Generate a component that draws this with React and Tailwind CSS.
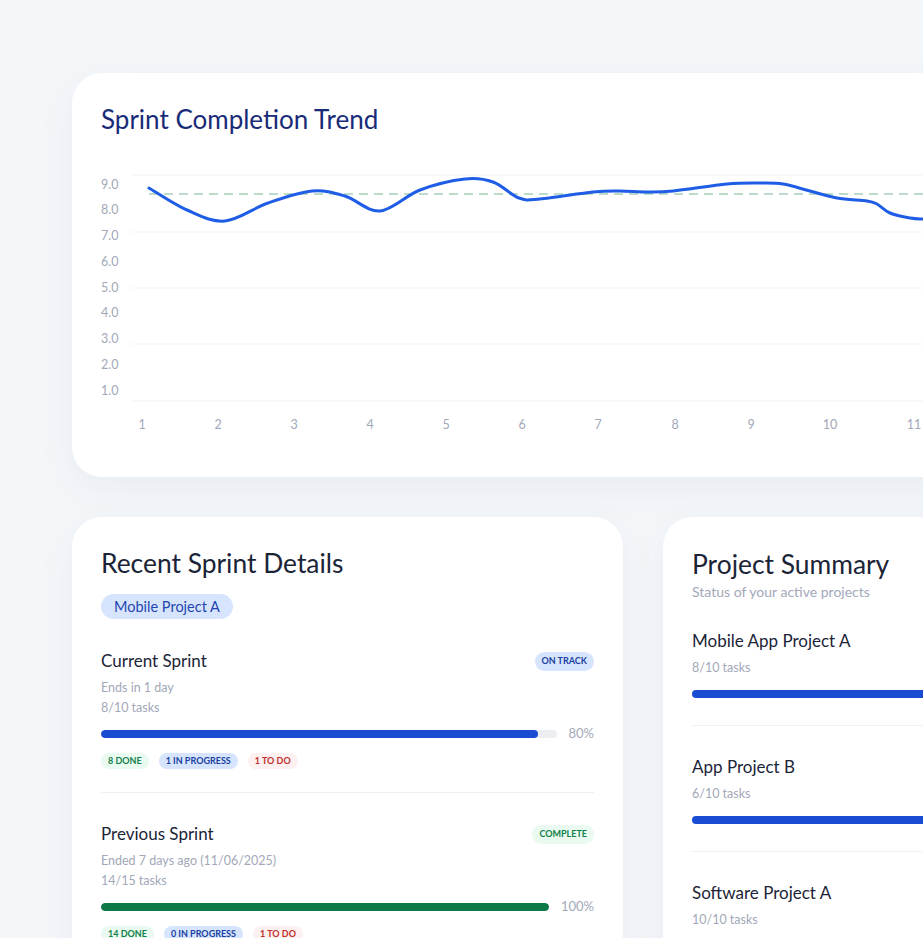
import React from 'react';

// sprint scores plotted as pixel points along the trend chart
const trend = [
  [48, 28], [86, 50], [124, 61], [167, 43], [211, 31], [244, 36], [279, 51],
  [319, 30], [364, 19], [392, 22], [418, 38], [439, 39], [492, 32], [519, 31],
  [546, 32], [572, 31], [626, 24], [659, 23], [682, 24], [709, 31], [736, 38],
  [766, 41], [776, 44], [789, 53], [809, 58], [822, 59], [860, 59]
];

const yLabels = ['9.0', '8.0', '7.0', '6.0', '5.0', '4.0', '3.0', '2.0', '1.0'];
const xLabels = [41, 117, 193, 269, 345, 421, 497, 574, 650, 729, 813];
const gridLines = [15, 72, 128, 184, 241];

function smoothPath(pts) {
  let d = `M${pts[0][0]},${pts[0][1]}`;
  for (let i = 0; i < pts.length - 1; i++) {
    const p0 = pts[i - 1] || pts[i];
    const p1 = pts[i];
    const p2 = pts[i + 1];
    const p3 = pts[i + 2] || p2;
    const c1x = p1[0] + (p2[0] - p0[0]) / 6;
    const c1y = p1[1] + (p2[1] - p0[1]) / 6;
    const c2x = p2[0] - (p3[0] - p1[0]) / 6;
    const c2y = p2[1] - (p3[1] - p1[1]) / 6;
    d += ` C${c1x},${c1y} ${c2x},${c2y} ${p2[0]},${p2[1]}`;
  }
  return d;
}

function TrendChart() {
  return (
    <svg width="850" height="280" className="block mt-[25px] overflow-visible">
      {gridLines.map(y => (
        <line key={y} x1="31" x2="850" y1={y} y2={y} stroke="#f1f3f7" strokeWidth="1" />
      ))}
      {yLabels.map((label, i) => (
        <text
          key={label}
          x="0"
          y={25.5 + i * 25.75}
          dominantBaseline="middle"
          fill="#a2a8b8"
          fontSize="12.5"
          fontFamily="Lato, sans-serif"
        >
          {label}
        </text>
      ))}
      {xLabels.map((x, i) => (
        <text
          key={x}
          x={x}
          y="265.5"
          textAnchor="middle"
          dominantBaseline="middle"
          fill="#a2a8b8"
          fontSize="12.5"
          fontFamily="Lato, sans-serif"
        >
          {i + 1}
        </text>
      ))}
      <line x1="48" x2="850" y1="34" y2="34" stroke="#bcdcc9" strokeWidth="2" strokeDasharray="9 6" />
      <path d={smoothPath(trend)} fill="none" stroke="#1f5de6" strokeWidth="3" strokeLinecap="round" />
    </svg>
  );
}

const badgeTones = {
  green: 'bg-[#eafaf1] text-[#11804a]',
  blue: 'bg-[#d6e5fd] text-[#1b3fa0]',
  red: 'bg-[#fdf0f0] text-[#c0312b]'
};

function Badge({ tone, children, className = '' }) {
  return (
    <span
      className={`inline-flex items-center h-4 px-[7px] rounded-full text-[9px] font-bold uppercase ${badgeTones[tone]} ${className}`}
    >
      {children}
    </span>
  );
}

function Progress({ fill, color, label }) {
  return (
    <div className="flex items-center gap-3 h-5">
      <div className="flex-1 h-2 rounded-full bg-[#eceef2] overflow-hidden">
        <div className={`h-full rounded-full ${color}`} style={{ width: fill }} />
      </div>
      <span className="text-[13px] text-[#a2a8b8]">{label}</span>
    </div>
  );
}

function SprintBlock({ title, status, statusTone, when, tasks, fill, color, pct, counts }) {
  return (
    <div>
      <div className="flex items-center justify-between h-6">
        <span className="text-[17px] text-[#1b2437]">{title}</span>
        <Badge tone={statusTone} className="h-[19px]">{status}</Badge>
      </div>
      <div className="mt-[5px] text-[12.5px] leading-5 text-[#a2a8b8]">{when}</div>
      <div className="text-[12.5px] leading-5 text-[#a2a8b8]">{tasks}</div>
      <div className="mt-[6px]">
        <Progress fill={fill} color={color} label={pct} />
      </div>
      <div className="mt-[9px] flex gap-[10px]">
        <Badge tone="green">{counts[0]} done</Badge>
        <Badge tone="blue">{counts[1]} in progress</Badge>
        <Badge tone="red">{counts[2]} to do</Badge>
      </div>
    </div>
  );
}

const projects = [
  { name: 'Mobile App Project A', tasks: '8/10 tasks' },
  { name: 'App Project B', tasks: '6/10 tasks' },
  { name: 'Software Project A', tasks: '10/10 tasks' }
];

export default function App() {
  return (
    <div className="relative w-[923px] h-[938px] overflow-hidden bg-[#f4f7fa] font-['Lato',sans-serif] pl-[72px] pt-[73px]">
      {/* Trend chart card */}
      <section className="w-[900px] h-[404px] rounded-[30px] bg-white shadow-[0_12px_40px_rgba(30,50,90,0.06)] pt-[30px] pl-[29px] overflow-hidden">
        <h2 className="text-[26px] leading-8 text-[#182b78]">Sprint Completion Trend</h2>
        <TrendChart />
      </section>

      <div className="mt-10 flex gap-10">
        {/* Recent sprints */}
        <section className="w-[551px] h-[460px] shrink-0 rounded-[30px] bg-white shadow-[0_12px_40px_rgba(30,50,90,0.06)] pt-[30px] px-[29px]">
          <h2 className="text-[26.4px] leading-8 text-[#1b2437]">Recent Sprint Details</h2>
          <span className="mt-[15px] inline-flex items-center h-[25px] px-[13px] rounded-full bg-[#d6e5fd] text-[14.5px] text-[#1f45b0]">
            Mobile Project A
          </span>
          <div className="mt-[30px]">
            <SprintBlock
              title="Current Sprint"
              status="On track"
              statusTone="blue"
              when="Ends in 1 day"
              tasks="8/10 tasks"
              fill="96%"
              color="bg-[#1a4bd3]"
              pct="80%"
              counts={[8, 1, 1]}
            />
          </div>
          <div className="mt-[23px] h-px bg-[#eef0f4]" />
          <div className="mt-[29px]">
            <SprintBlock
              title="Previous Sprint"
              status="Complete"
              statusTone="green"
              when="Ended 7 days ago (11/06/2025)"
              tasks="14/15 tasks"
              fill="100%"
              color="bg-[#0b7a47]"
              pct="100%"
              counts={[14, 0, 1]}
            />
          </div>
        </section>

        {/* Project summary */}
        <section className="w-[320px] h-[460px] shrink-0 rounded-[30px] bg-white shadow-[0_12px_40px_rgba(30,50,90,0.06)] pt-[31px] pl-[29px]">
          <h2 className="text-[26.4px] leading-8 text-[#1b2437]">Project Summary</h2>
          <p className="mt-[2px] text-[14px] leading-5 text-[#a2a8b8]">Status of your active projects</p>
          <div className="mt-[27px]">
            {projects.map((p, i) => (
              <div key={p.name}>
                {i > 0 && <div className="mt-[27px] mb-[29px] h-px bg-[#eef0f4]" />}
                <div className="text-[17px] leading-6 text-[#1b2437]">{p.name}</div>
                <div className="mt-[5px] text-[12.5px] leading-5 text-[#a2a8b8]">{p.tasks}</div>
                <div className="mt-3 h-2 rounded-l-full bg-[#1a4bd3]" />
              </div>
            ))}
          </div>
        </section>
      </div>
    </div>
  );
}
